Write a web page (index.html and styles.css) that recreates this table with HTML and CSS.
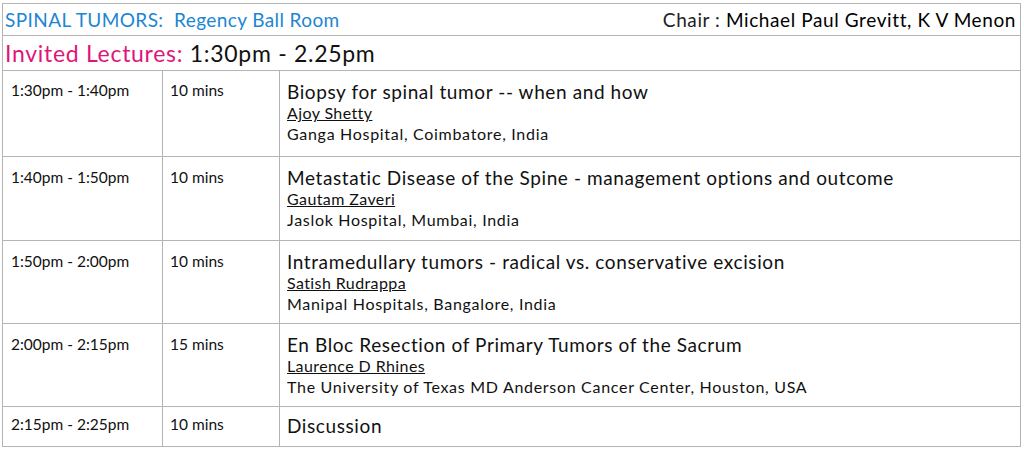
FILE: index.html
```html
<!DOCTYPE html>
<html lang="en">
<head>
    <meta charset="UTF-8">
    <meta name="viewport" content="width=device-width, initial-scale=1.0">
    <title>Spinal Tumors - Invited Lectures</title>
    <link rel="stylesheet" href="styles.css">
</head>
<body>
    <table class="session">
        <colgroup>
            <col class="col-time">
            <col class="col-dur">
            <col class="col-talk">
        </colgroup>
        <tr class="head-row">
            <td colspan="3">
                <div class="head">
                    <span class="track">SPINAL TUMORS:&nbsp; Regency Ball Room</span>
                    <span class="chair">Chair : <span class="chair-names">Michael Paul Grevitt, K V Menon</span></span>
                </div>
            </td>
        </tr>
        <tr class="block-row">
            <td colspan="3"><span class="block">Invited Lectures:</span> 1:30pm - 2.25pm</td>
        </tr>
        <tr class="first-row">
            <td class="time">1:30pm - 1:40pm</td>
            <td class="dur">10 mins</td>
            <td class="talk">
                <div class="title">Biopsy for spinal tumor -- when and how</div>
                <div class="speaker"><u>Ajoy Shetty</u></div>
                <div class="place">Ganga Hospital, Coimbatore, India</div>
            </td>
        </tr>
        <tr class="tall-row">
            <td class="time">1:40pm - 1:50pm</td>
            <td class="dur">10 mins</td>
            <td class="talk">
                <div class="title">Metastatic Disease of the Spine - management options and outcome</div>
                <div class="speaker"><u>Gautam Zaveri</u></div>
                <div class="place">Jaslok Hospital, Mumbai, India</div>
            </td>
        </tr>
        <tr>
            <td class="time">1:50pm - 2:00pm</td>
            <td class="dur">10 mins</td>
            <td class="talk">
                <div class="title">Intramedullary tumors - radical vs. conservative excision</div>
                <div class="speaker"><u>Satish Rudrappa</u></div>
                <div class="place">Manipal Hospitals, Bangalore, India</div>
            </td>
        </tr>
        <tr>
            <td class="time">2:00pm - 2:15pm</td>
            <td class="dur">15 mins</td>
            <td class="talk">
                <div class="title">En Bloc Resection of Primary Tumors of the Sacrum</div>
                <div class="speaker"><u>Laurence D Rhines</u></div>
                <div class="place">The University of Texas MD Anderson Cancer Center, Houston, USA</div>
            </td>
        </tr>
        <tr class="short-row">
            <td class="time">2:15pm - 2:25pm</td>
            <td class="dur">10 mins</td>
            <td class="talk">
                <div class="title">Discussion</div>
            </td>
        </tr>
    </table>
</body>
</html>
```

FILE: styles.css
```css
body {
    margin: 3px 0 0 2px;
    background: #fff;
    font-family: Lato, "Noto Sans", sans-serif;
    color: #111;
}
.session {
    width: 1019px;
    border-collapse: collapse;
    table-layout: fixed;
}
.col-time { width: 160px; }
.col-dur { width: 117px; }
td {
    border: 1px solid #b4b4b4;
    vertical-align: top;
    padding: 10px 7px 9px;
}
.head-row td {
    height: 31px;
    padding: 0 4px 0 2px;
    vertical-align: middle;
}
.head {
    display: flex;
    justify-content: space-between;
    align-items: center;
}
.track { color: #1c86d2; font-size: 19px; letter-spacing: 0.4px; }
.chair { font-size: 19px; letter-spacing: 0.6px; color: #222; }
.chair-names { color: #000; }
.block-row td {
    height: 34px;
    padding: 0 2px;
    vertical-align: middle;
    font-size: 23px;
    letter-spacing: 0.7px;
    color: #111;
}
.block { color: #e0157a; }
.time { font-size: 15.5px; padding-top: 11px; padding-left: 8px; }
.dur { font-size: 15.5px; padding-top: 11px; }
.talk { line-height: 21px; }
.title { font-size: 19px; letter-spacing: 0.6px; }
.speaker, .place { font-size: 16px; letter-spacing: 0.7px; }
.speaker { letter-spacing: 0.4px; }
.first-row td { padding-top: 10px; padding-bottom: 12px; }
.first-row .time, .first-row .dur { padding-top: 10px; }
.tall-row td { padding-bottom: 10px; }
.short-row td { padding-top: 8px; padding-bottom: 10px; }
```
